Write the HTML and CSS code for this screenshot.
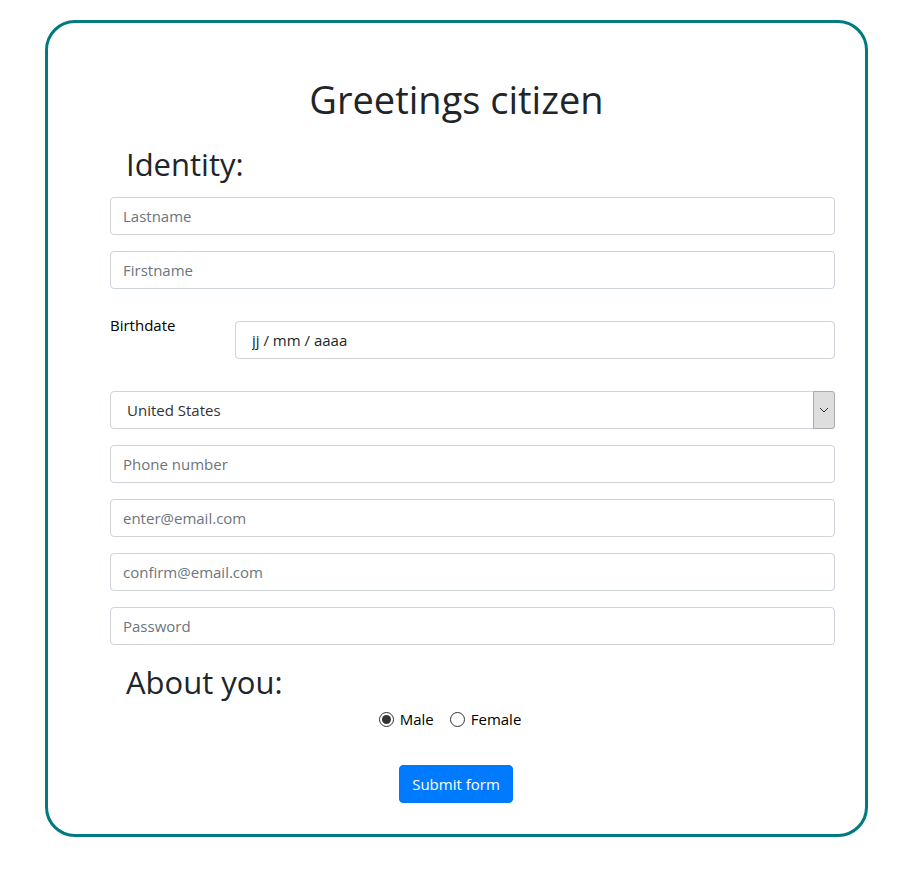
FILE: index.html
```html
<!DOCTYPE html>
<html>
<head>
<meta charset="utf-8">
<link rel="stylesheet" href="styles.css">
</head>
<body>
<div class="card">
  <h1 class="title">Greetings citizen</h1>
  <form class="form">
    <h2 class="section">Identity:</h2>
    <input class="field" type="text" placeholder="Lastname">
    <input class="field" type="text" placeholder="Firstname">
    <div class="date-row">
      <label class="date-label">Birthdate</label>
      <input class="field date-field" type="text" value="jj / mm / aaaa">
    </div>
    <div class="select-wrap">
      <span class="select-text">United States</span>
      <span class="select-btn"><svg width="10" height="6" viewBox="0 0 10 6"><path d="M1 1 L5 5 L9 1" fill="none" stroke="#333" stroke-width="1"/></svg></span>
    </div>
    <input class="field" type="text" placeholder="Phone number">
    <input class="field" type="text" placeholder="enter@email.com">
    <input class="field" type="text" placeholder="confirm@email.com">
    <input class="field" type="password" placeholder="Password">
    <h2 class="section about">About you:</h2>
    <div class="radios">
      <label class="radio"><span class="dot checked"></span>Male</label>
      <label class="radio"><span class="dot"></span>Female</label>
    </div>
    <div class="actions">
      <button class="submit" type="button">Submit form</button>
    </div>
  </form>
</div>
</body>
</html>
```

FILE: styles.css
```css
* { box-sizing: border-box; }
body {
  margin: 0;
  font-family: "Open Sans", "Noto Sans", sans-serif;
  color: #212529;
  background: #fff;
}
.card {
  margin: 20px 0 0 45px;
  width: 823px;
  height: 817px;
  border: 3px solid #007a7f;
  border-radius: 30px;
  padding-top: 52px;
}
.title {
  margin: 0;
  text-align: center;
  font-weight: 400;
  font-size: 38px;
  line-height: 48px;
}
.form {
  padding: 0 30px 0 62px;
  display: flex;
  flex-direction: column;
}
.section {
  margin: 22px 0 14px 16px;
  font-weight: 400;
  font-size: 31px;
  line-height: 38px;
}
.about {
  margin: 2px 0 6px 16px;
}
.field {
  display: block;
  width: 100%;
  height: 38px;
  padding: 6px 12px;
  border: 1px solid #ced4da;
  border-radius: 4px;
  font-family: inherit;
  font-size: 15px;
  color: #495057;
  margin-bottom: 16px;
  outline: none;
}
.field::placeholder { color: #6c757d; }
.date-row {
  display: flex;
  align-items: flex-start;
  margin-bottom: 32px;
}
.date-label {
  width: 125px;
  flex: none;
  padding-top: 10px;
  font-size: 15px;
  color: #000;
}
.date-field {
  margin-top: 16px;
  margin-bottom: 0;
  padding-left: 16px;
  color: #212529;
}
.select-wrap {
  display: flex;
  align-items: stretch;
  height: 38px;
  border: 1px solid #ced4da;
  border-radius: 4px;
  margin-bottom: 16px;
}
.select-text {
  flex: 1;
  padding-left: 16px;
  display: flex;
  align-items: center;
  font-size: 15px;
  color: #333;
}
.select-btn {
  width: 22px;
  background: #dedede;
  border: 1px solid #ababab;
  border-radius: 0 3px 3px 0;
  margin: -1px -1px -1px 0;
  display: flex;
  align-items: center;
  justify-content: center;
}
.radios {
  display: flex;
  justify-content: center;
  gap: 16px;
  padding-right: 45px;
}
.radio {
  display: flex;
  align-items: center;
  font-size: 15px;
  color: #000;
  line-height: 24px;
}
.dot {
  width: 15px;
  height: 15px;
  border: 1px solid #333;
  border-radius: 50%;
  margin-right: 6px;
  display: flex;
  align-items: center;
  justify-content: center;
}
.dot.checked::after {
  content: "";
  width: 9px;
  height: 9px;
  border-radius: 50%;
  background: #333;
}
.actions {
  display: flex;
  justify-content: center;
  margin-top: 34px;
  padding-right: 33px;
}
.submit {
  background: #007bff;
  color: #fff;
  border: 1px solid #007bff;
  border-radius: 4px;
  font-family: inherit;
  font-size: 15px;
  height: 38px;
  padding: 0 12px;
}
```
